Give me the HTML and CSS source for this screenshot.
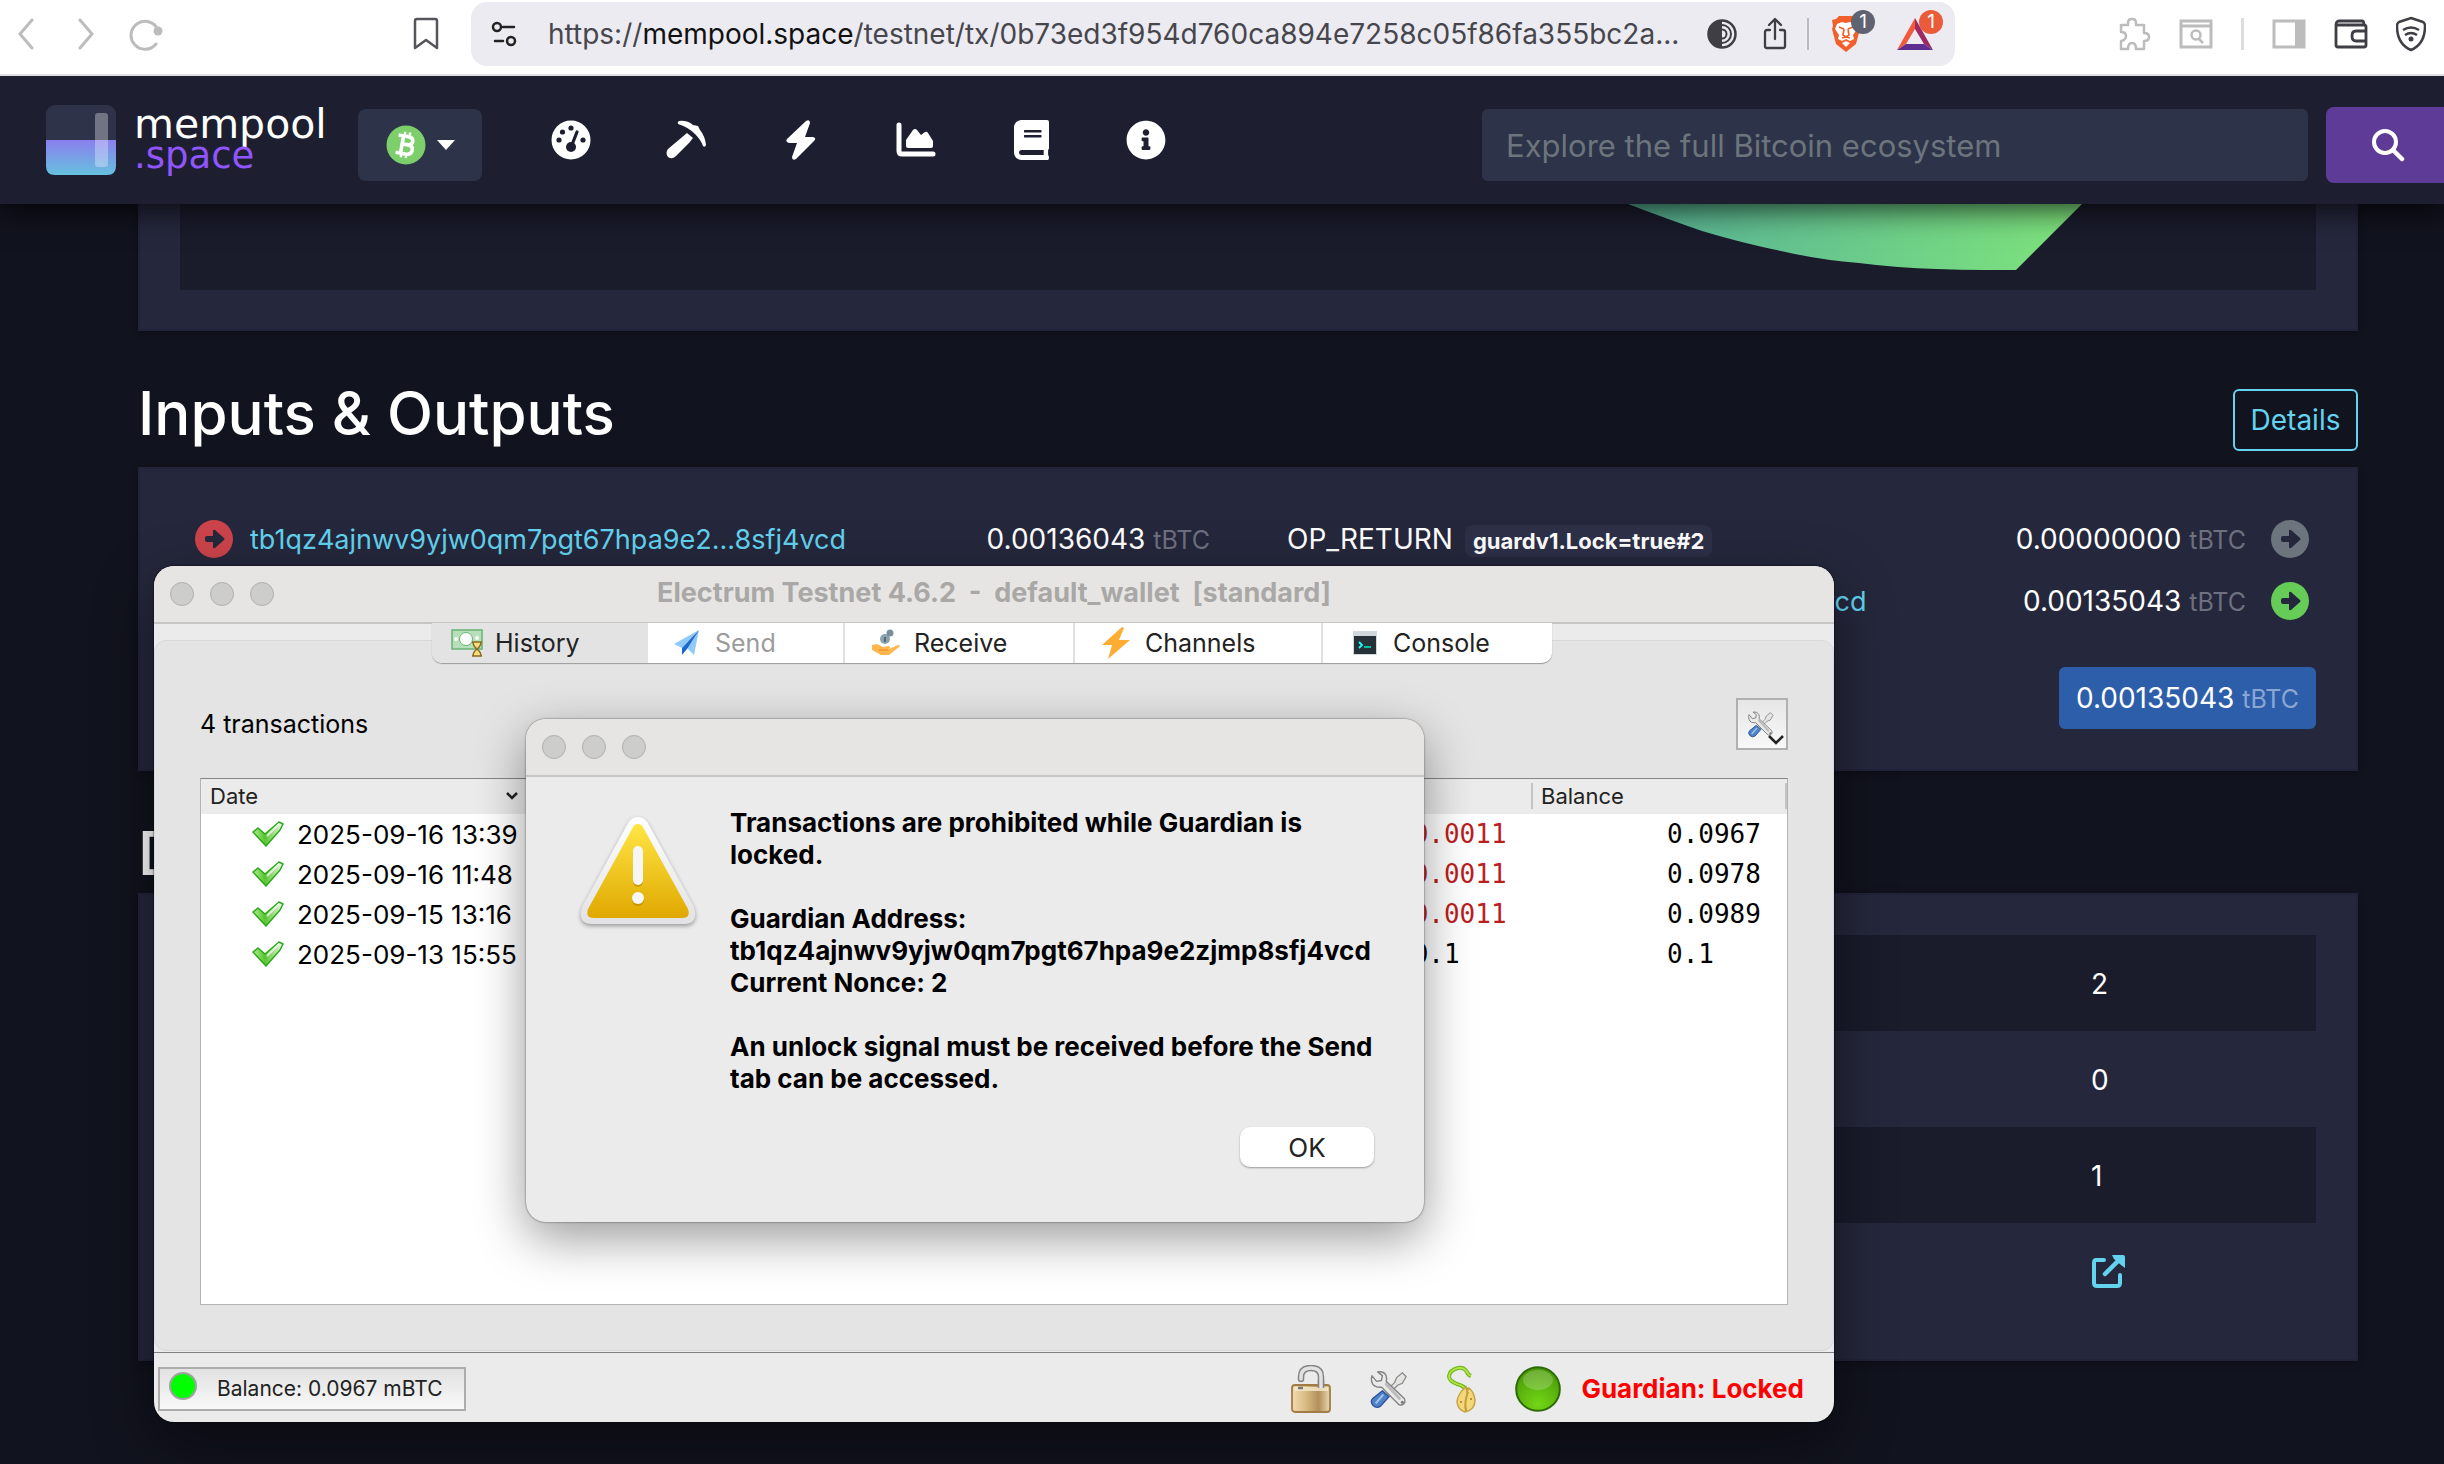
FILE: index.html
```html
<!DOCTYPE html>
<html lang="en">
<head>
<meta charset="utf-8">
<title>Transaction - mempool.space</title>
<link rel="stylesheet" href="styles.css">
</head>
<body>
<svg class="defs" width="0" height="0" aria-hidden="true">
  <defs>
    <linearGradient id="liquid" x1="0" y1="0" x2="0" y2="1"><stop offset="0" stop-color="#8a7fee"/><stop offset="1" stop-color="#66c1de"/></linearGradient>
    <linearGradient id="flow" x1="0" y1="0" x2="1" y2="0"><stop offset="0" stop-color="#56b095"/><stop offset=".4" stop-color="#66c68e"/><stop offset="1" stop-color="#7fe47b"/></linearGradient>
    <linearGradient id="warn" x1="0" y1="0" x2="0" y2="1"><stop offset="0" stop-color="#ffe645"/><stop offset="1" stop-color="#e0a800"/></linearGradient>
    <linearGradient id="rim" x1="0" y1="0" x2="0" y2="1"><stop offset="0" stop-color="#fff"/><stop offset="1" stop-color="#e2e2e4"/></linearGradient>
    <linearGradient id="check" x1="0" y1="0" x2="1" y2="0"><stop offset="0" stop-color="#b5ee8d"/><stop offset=".4" stop-color="#55c42e"/><stop offset="1" stop-color="#f2fbea"/></linearGradient>
    <linearGradient id="brass" x1="0" y1="0" x2="1" y2="0"><stop offset="0" stop-color="#efd9ae"/><stop offset=".35" stop-color="#d9bd85"/><stop offset=".7" stop-color="#b0905a"/><stop offset="1" stop-color="#ecd8b0"/></linearGradient>
    <radialGradient id="ball" cx=".5" cy=".85" r=".8"><stop offset="0" stop-color="#73d716"/><stop offset="1" stop-color="#4b9a08"/></radialGradient>
    <symbol id="arrow-circle" viewBox="0 0 38 38"><circle cx="19" cy="19" r="19" fill="currentColor"/><path d="M12 16h6v-5q0-2 2-1l9 8q1 1 0 2l-9 8q-2 1-2-1v-5h-6q-2 0-2-2v-2q0-2 2-2z" fill="#25273c"/></symbol>
    <symbol id="tick" viewBox="0 0 32 26"><path d="M1 11l5-4 7 6L27 1l4 2-3 6-14 16z" fill="url(#check)" stroke="#2ba81c" stroke-width="1.5" stroke-linejoin="round"/><path d="M15 15L27 3" stroke="#fff" stroke-width="2" opacity=".7"/></symbol>
    <symbol id="tools" viewBox="0 0 42 40">
      <path d="M35 3l4 4-4 7-5 2-9 9-3-3 9-9 2-5z" fill="#e4e4e2" stroke="#888" stroke-width="1.3"/>
      <path d="M14 22l7 6-9 10q-4 3-8-1-3-4 0-7z" fill="#4f83c8" stroke="#2c559b" stroke-width="1.5"/><path d="M15 26l-8 9" stroke="#a2c5ee" stroke-width="2"/>
      <path d="M3 6l5 6 5-1 1-5-5-4q7-1 9 4 1 3 0 6l19 18q2 4-1 6-4 2-6-1L13 18q-8 1-10-5-1-4 0-7z" fill="#e9e9e7" stroke="#858585" stroke-width="1.5" stroke-linejoin="round"/><path d="M18 15l14 15" stroke="#bbb" stroke-width="3" stroke-linecap="round"/><circle cx="35" cy="34" r="1.6" fill="#777"/>
    </symbol>
  </defs>
</svg>

<header class="toolbar">
  <div class="tools-left">
    <button class="icon-btn" aria-label="Back"><svg width="18" height="32" viewBox="0 0 18 32"><path d="M15 2L3 16l12 14" fill="none" stroke="#bcbcbc" stroke-width="3" stroke-linecap="round" stroke-linejoin="round"/></svg></button>
    <button class="icon-btn" aria-label="Forward"><svg width="18" height="32" viewBox="0 0 18 32"><path d="M3 2l12 14L3 30" fill="none" stroke="#bcbcbc" stroke-width="3" stroke-linecap="round" stroke-linejoin="round"/></svg></button>
    <button class="icon-btn reload" aria-label="Reload"><svg width="34" height="34" viewBox="0 0 34 34"><path d="M29 13A14 14 0 1 0 27 27" fill="none" stroke="#bcbcbc" stroke-width="3" stroke-linecap="round"/><circle cx="29" cy="14" r="4.500" fill="#bcbcbc"/></svg></button>
  </div>
  <button class="icon-btn bookmark" aria-label="Bookmark"><svg width="26" height="34" viewBox="0 0 26 34"><path d="M2 4q0-2 2-2h18q2 0 2 2v27l-11-8L2 31z" fill="none" stroke="#55555b" stroke-width="2.500" stroke-linejoin="round"/></svg></button>
  <div class="address">
    <svg width="26" height="26" viewBox="0 0 26 26"><g fill="none" stroke="#222" stroke-width="2.500" stroke-linecap="round"><circle cx="6" cy="6" r="4"/><path d="M12 6h11M4 20h8"/><circle cx="20" cy="20" r="4"/></g></svg>
    <div class="url">https://<b>mempool.space</b>/testnet/tx/0b73ed3f954d760ca894e7258c05f86fa355bc2a...</div>
    <svg width="30" height="30" viewBox="0 0 30 30"><circle cx="15" cy="15" r="13.500" fill="none" stroke="#3e3e44" stroke-width="2.500"/><path d="M15 1a14 14 0 0 0 0 28z" fill="#3e3e44"/><path d="M15 6a9 9 0 0 1 0 18M15 10.500a4.500 4.500 0 0 1 0 9" fill="none" stroke="#3e3e44" stroke-width="2"/></svg>
    <svg class="share" width="24" height="34" viewBox="0 0 24 34"><path d="M7 13H4q-2 0-2 2v14q0 2 2 2h16q2 0 2-2V15q0-2-2-2h-3M12 22V3M6 8l6-6 6 6" fill="none" stroke="#3e3e44" stroke-width="2.300" stroke-linecap="round" stroke-linejoin="round"/></svg>
    <span class="bar-line"></span>
    <span class="badged"><svg width="30" height="36" viewBox="0 0 30 36"><path d="M8 0h14l3 3 4 1-1 6 1 3-4 15-10 8-10-8L1 13l1-3-1-6 4-1z" fill="#f1602a"/><path d="M6 8l5-2 4 1 4-1 5 2 2 5-4 6 1 4-4 2-4-2-4 2-4-2 1-4-4-6zM11 27l4-2 4 2-4 4z" fill="#fff"/><path d="M8 11l5 2M22 11l-5 2M13 13l-1 6 3 2 3-2-1-6M11 22l4-1 4 1" fill="none" stroke="#f1602a" stroke-width="1.700"/></svg><span class="count grey">1</span></span>
    <span class="badged"><svg width="36" height="32" viewBox="0 0 36 32"><path d="M18 0L0 32l9-6 9-15z" fill="#f15a3a"/><path d="M18 0l18 32-9-6-9-15z" fill="#9e2a63"/><path d="M0 32h36l-9-6H9z" fill="#5f2e91"/></svg><span class="count red">1</span></span>
  </div>
  <div class="tools-right">
    <svg width="34" height="34" viewBox="0 0 34 34"><path d="M4 8h7V6q0-4 4-4t4 4v2h8v8q5 0 5 4t-5 4v8h-8q0-6-4-6t-4 6H4v-8q5-1 5-5t-5-4z" fill="none" stroke="#bcbcbc" stroke-width="2.500" stroke-linejoin="round"/></svg>
    <svg width="34" height="30" viewBox="0 0 34 30"><path d="M2 2h30v26H2zM2 7h30" fill="none" stroke="#bcbcbc" stroke-width="3"/><circle cx="17" cy="16" r="4.500" fill="none" stroke="#bcbcbc" stroke-width="2.500"/><path d="M20 20l4 4" stroke="#bcbcbc" stroke-width="2.500"/></svg>
    <span class="bar-line light"></span>
    <svg width="34" height="30" viewBox="0 0 34 30"><path d="M2 2h30v26H2z" fill="none" stroke="#bcbcbc" stroke-width="3"/><path d="M23 2h9v26h-9z" fill="#bcbcbc"/></svg>
    <svg width="34" height="30" viewBox="0 0 34 30"><path d="M2 6v20q0 2 2 2h26q2 0 2-2V8q0-2-2-2zq0-4 3-4h23q2 0 2 4M32 12H22q-4 0-4 5t4 5h10" fill="none" stroke="#3e3e44" stroke-width="2.800" stroke-linejoin="round"/></svg>
    <svg width="30" height="36" viewBox="0 0 30 36"><path d="M15 2l12 4q2 1 2 4 0 18-14 24Q1 28 1 10q0-3 2-4z" fill="none" stroke="#3e3e44" stroke-width="2.500"/><path d="M7 14q8-5 16 0M9 19q6-4 12 0" fill="none" stroke="#3e3e44" stroke-width="2.500"/><circle cx="15" cy="23" r="2.500" fill="#3e3e44"/></svg>
  </div>
</header>

<nav class="navbar">
  <a class="brand" href="#"><svg width="70" height="70" viewBox="0 0 70 70"><rect width="70" height="70" rx="9" fill="#2e3349"/><path d="M0 35h70v26q0 9-9 9H9q-9 0-9-9z" fill="url(#liquid)"/><rect x="49" y="8" width="13" height="54" rx="3" fill="#fff" opacity=".32"/></svg><span class="brand-text">mempool<span>.space</span></span></a>
  <button class="network" aria-label="Network"><svg width="40" height="40" viewBox="0 0 40 40"><circle cx="20" cy="20" r="19.500" fill="#7ccf6b"/><g transform="rotate(10 20 20)" fill="none" stroke="#fff"><path d="M16 11v18M11 11.500h10q5 0 5 4t-5 4h-5h6q5 0 5 4.500t-5 5H11" stroke-width="3.600"/><path d="M17 7v5M22 7v5M17 28v5M22 28v5" stroke-width="2.400"/></g></svg><svg width="18" height="10" viewBox="0 0 18 10"><path d="M0 0h18L9 10z" fill="#fff"/></svg></button>
  <ul class="menu">
    <li><a href="#" aria-label="Dashboard"><svg width="40" height="40" viewBox="0 0 40 40"><circle cx="20" cy="20" r="19.500" fill="#fff"/><g fill="#1d1f31"><circle cx="20" cy="8" r="2.600"/><circle cx="11.500" cy="12" r="2.600"/><circle cx="8" cy="20" r="2.600"/><circle cx="32" cy="20" r="2.600"/><circle cx="20" cy="27" r="5"/></g><path d="M20.500 26l5.500-14" stroke="#1d1f31" stroke-width="3.200" stroke-linecap="round"/></svg></a></li>
    <li><a href="#" aria-label="Mining"><svg width="40" height="40" viewBox="0 0 40 40"><path d="M13 1q-2 1-1 3 10 3 17 10 6 6 8 12 2 2 3-1-1-9-6-15l-2-4-5-1Q21 0 13 1z" fill="#fff"/><path d="M21 13l6 5-4 5L10 36q-4 4-8 1-3-4 0-8z" fill="#fff"/></svg></a></li>
    <li><a href="#" aria-label="Lightning"><svg width="30" height="40" viewBox="0 0 30 40"><path d="M20 1q4-2 4 2l-5 14h8q4 1 1 4L10 39q-4 2-4-2l5-14H3q-4-1-2-4z" fill="#fff"/></svg></a></li>
    <li><a href="#" aria-label="Graphs"><svg width="40" height="40" viewBox="0 0 40 40"><path d="M3 5v26q0 3 3 3h31" fill="none" stroke="#fff" stroke-width="5" stroke-linecap="round"/><path d="M10 20l7-10q2-2 4 0l4 5 4-3q2-1 3 1l5 8v5q0 2-2 2H12q-2 0-2-2z" fill="#fff"/></svg></a></li>
    <li><a href="#" aria-label="Docs"><svg width="35" height="40" viewBox="0 0 448 512"><path fill="#fff" d="M448 360V24c0-13.300-10.700-24-24-24H96C43 0 0 43 0 96v320c0 53 43 96 96 96h328c13.300 0 24-10.700 24-24v-16c0-7.500-3.500-14.300-8.900-18.700-4.200-15.400-4.200-59.300 0-74.700 5.400-4.300 8.900-11.100 8.900-18.600zM128 134c0-3.300 2.700-6 6-6h212c3.300 0 6 2.700 6 6v20c0 3.300-2.700 6-6 6H134c-3.300 0-6-2.700-6-6v-20zm0 64c0-3.300 2.700-6 6-6h212c3.300 0 6 2.700 6 6v20c0 3.300-2.700 6-6 6H134c-3.300 0-6-2.700-6-6v-20zm253.400 250H96c-17.700 0-32-14.300-32-32 0-17.600 14.400-32 32-32h285.400c-1.900 17.100-1.900 46.900 0 64z"/></svg></a></li>
    <li><a href="#" aria-label="About"><svg width="40" height="40" viewBox="0 0 512 512"><path fill="#fff" d="M256 8C119 8 8 119 8 256c0 137 111 248 248 248s248-111 248-248C504 119 393 8 256 8zm0 110c23.200 0 42 18.800 42 42s-18.800 42-42 42-42-18.800-42-42 18.800-42 42-42zm56 254c0 6.600-5.400 12-12 12h-88c-6.600 0-12-5.400-12-12v-24c0-6.600 5.400-12 12-12h12v-64h-12c-6.600 0-12-5.400-12-12v-24c0-6.600 5.400-12 12-12h64c6.600 0 12 5.400 12 12v100h12c6.600 0 12 5.400 12 12v24z"/></svg></a></li>
  </ul>
  <form class="search"><input type="text" aria-label="Search" placeholder="Explore the full Bitcoin ecosystem"><button type="button" aria-label="Search"><svg width="34" height="34" viewBox="0 0 34 34"><circle cx="14" cy="14" r="11" fill="none" stroke="#fff" stroke-width="4"/><path d="M22 22l9 9" stroke="#fff" stroke-width="4.500" stroke-linecap="round"/></svg></button></form>
</nav>

<main class="page">
  <section class="box flow-box"><div class="flow"><svg width="454" height="66" viewBox="0 0 454 66"><path d="M0 0q42 16 74 27 40 12 79 20 39 9 78 12 39 5 78 6 24 1 47 1h32L454 0z" fill="url(#flow)"/></svg></div></section>

  <div class="section-head"><h2>Inputs &amp; Outputs</h2><button class="outline">Details</button></div>
  <section class="box io">
    <div class="io-cols">
      <div class="io-row"><svg class="red-icon" width="38" height="38"><use href="#arrow-circle"/></svg><a href="#">tb1qz4ajnwv9yjw0qm7pgt67hpa9e2...8sfj4vcd</a><span class="amount">0.00136043 <small>tBTC</small></span></div>
      <div>
        <div class="io-row"><span>OP_RETURN</span><span class="tag">guardv1.Lock=true#2</span><span class="amount">0.00000000 <small>tBTC</small></span><svg class="grey-icon" width="38" height="38"><use href="#arrow-circle"/></svg></div>
        <div class="io-row"><a href="#">tb1qz4ajnwv9yjw0qm7pgt67hpa9e...8sfj4vcd</a><span class="amount">0.00135043 <small>tBTC</small></span><svg class="green-icon" width="38" height="38"><use href="#arrow-circle"/></svg></div>
      </div>
    </div>
    <button class="total">0.00135043 <small>tBTC</small></button>
  </section>

  <div class="section-head second"><h2>Details</h2></div>
  <section class="box details">
    <table>
      <tr><td></td><td>2</td></tr>
      <tr><td></td><td>0</td></tr>
      <tr><td></td><td>1</td></tr>
      <tr><td></td><td><a href="#" aria-label="Open"><svg width="34" height="34" viewBox="0 0 34 34"><path d="M13 5H5q-2 0-2 3v20q0 3 3 3h20q3 0 3-3v-8" fill="none" stroke="#63d3ef" stroke-width="4" stroke-linecap="round"/><path d="M14 19L27 6" stroke="#63d3ef" stroke-width="4.500" stroke-linecap="round"/><path d="M21 0h11q2 0 2 2v11l-4-3-7-6z" fill="#63d3ef"/></svg></a></td></tr>
    </table>
  </section>
</main>

<section class="window wallet">
  <div class="titlebar"><span class="lights"><i></i><i></i><i></i></span><span class="title">Electrum Testnet 4.6.2 &nbsp;- &nbsp;default_wallet &nbsp;[standard]</span></div>
  <div class="tabs">
    <button class="tab t-history on"><svg width="32" height="28" viewBox="0 0 32 28"><rect x="1" y="1" width="30" height="19" fill="#b7dfba" stroke="#69b374" stroke-width="1.500"/><circle cx="15" cy="10" r="6.500" fill="#fff" stroke="#69b374"/><circle cx="5" cy="10" r="2" fill="#fff"/><circle cx="26" cy="9" r="2" fill="#fff"/><path d="M21 13h10M21 27h10M22 13q0 4 4 7-4 3-4 7h8q0-4-4-7 4-3 4-7z" fill="#f7dd7b" stroke="#8a6a25" stroke-width="1.500"/></svg>History</button>
    <button class="tab t-send"><svg width="26" height="26" viewBox="0 0 26 26"><path d="M25 0L0 14l8 4z" fill="#90caf9"/><path d="M25 0L11 16l9 9z" fill="#90caf9"/><path d="M25 0L8 18v7l5-6z" fill="#1e66d0"/></svg>Send</button>
    <button class="tab t-receive"><svg width="28" height="28" viewBox="0 0 28 28"><circle cx="13" cy="10" r="5" fill="#8ba3af"/><circle cx="18" cy="4" r="3.500" fill="#78909c"/><path d="M13 8v5" stroke="#455a64" stroke-width="1.500"/><path d="M0 16l5-1 6 3 6-1q2 1 0 3l9-4q3 0 1 2l-10 8H9l-9-5z" fill="#ffb74d"/><path d="M7 21h9" stroke="#ef9530" stroke-width="1.500"/></svg>Receive</button>
    <button class="tab t-channels"><svg width="28" height="32" viewBox="0 0 28 32"><path d="M20 0L0 18h10L6 32l22-19H17l5-12z" fill="#ffac33"/></svg>Channels</button>
    <button class="tab t-console"><svg width="24" height="24" viewBox="0 0 24 24"><path d="M0 0h24v24H0z" fill="#cfd8dc"/><path d="M1 5h22v18H1z" fill="#263238"/><path d="M6 11l3 3-3 3" fill="none" stroke="#18ffff" stroke-width="1.800"/><path d="M11 16h7" stroke="#00bfa5" stroke-width="2"/></svg>Console</button>
  </div>
  <div class="pane">
    <div class="pane-head"><span>4 transactions</span><button class="tool-btn" aria-label="Tools"><svg width="28" height="30"><use href="#tools"/></svg><svg class="caret" width="16" height="10" viewBox="0 0 16 10"><path d="M1 1l7 7 7-7" fill="none" stroke="#222" stroke-width="2.500"/></svg></button></div>
    <div class="list">
      <table>
        <thead><tr><th class="c-date"><span>Date<svg width="12" height="8" viewBox="0 0 12 8"><path d="M1 1l5 5 5-5" fill="none" stroke="#222" stroke-width="2.500"/></svg></span></th><th class="c-desc"></th><th class="c-amt"></th><th class="c-bal"><span>Balance</span></th></tr></thead>
        <tbody>
          <tr><td class="date"><svg width="32" height="26"><use href="#tick"/></svg>2025-09-16 13:39</td><td></td><td class="amt neg">-0.0011</td><td class="bal">0.0967</td></tr>
          <tr><td class="date"><svg width="32" height="26"><use href="#tick"/></svg>2025-09-16 11:48</td><td></td><td class="amt neg">-0.0011</td><td class="bal">0.0978</td></tr>
          <tr><td class="date"><svg width="32" height="26"><use href="#tick"/></svg>2025-09-15 13:16</td><td></td><td class="amt neg">-0.0011</td><td class="bal">0.0989</td></tr>
          <tr><td class="date"><svg width="32" height="26"><use href="#tick"/></svg>2025-09-13 15:55</td><td></td><td class="amt"> 0.1</td><td class="bal">0.1</td></tr>
        </tbody>
      </table>
    </div>
  </div>
  <footer class="status">
    <button class="balance"><i></i>Balance: 0.0967 mBTC</button>
    <div class="status-right">
      <svg width="40" height="48" viewBox="0 0 40 48"><path d="M10 14v-2q0-9 10-9t10 9v12" fill="none" stroke="#858585" stroke-width="6.500" stroke-linecap="round"/><path d="M10 14v-2q0-9 10-9t10 9v12" fill="none" stroke="#e2e2e2" stroke-width="3.500" stroke-linecap="round"/><rect x="1" y="20" width="38" height="27" rx="3" fill="url(#brass)" stroke="#a37b45" stroke-width="1.800"/><path d="M3 22h34v4H3z" fill="#f5ead0" opacity=".8"/><path d="M7 23h5" stroke="#777" stroke-width="2.500"/><path d="M30 15v8" stroke="#858585" stroke-width="6.500"/><path d="M30 15v8" stroke="#e2e2e2" stroke-width="3.500"/></svg>
      <svg width="40" height="40"><use href="#tools"/></svg>
      <svg width="30" height="48" viewBox="0 0 30 48"><path d="M24 11q-3-1-4-4-3-5-9-4-8 2-9 8 0 5 8 8 8 2 11 8" fill="none" stroke="#75b51b" stroke-width="4"/><path d="M24 11q-3-1-4-4-3-5-9-4-8 2-9 8 0 5 8 8 8 2 11 8" fill="none" stroke="#aee84a" stroke-width="1.800"/><path d="M19 22q-8 6-9 15 1 8 8 10 10-2 10-12-1-8-6-12l-2 4z" fill="#f3d877" stroke="#c9a046" stroke-width="1.500"/><path d="M21 27q-4 10-2 19" fill="none" stroke="#c39a3c" stroke-width="2"/><circle cx="14" cy="37" r="1" fill="#a37b2b"/><circle cx="24" cy="34" r="1" fill="#a37b2b"/></svg>
      <svg width="46" height="46" viewBox="0 0 46 46"><circle cx="23" cy="23" r="21.800" fill="url(#ball)" stroke="#2d6b05" stroke-width="2"/><ellipse cx="23" cy="14" rx="15" ry="10" fill="#fff" opacity=".2"/></svg>
      <strong>Guardian: Locked</strong>
    </div>
  </footer>
</section>

<section class="window dialog" role="alertdialog" aria-label="Warning">
  <div class="titlebar"><span class="lights"><i></i><i></i><i></i></span></div>
  <div class="dialog-body">
    <svg class="warn-icon" width="118" height="112" viewBox="0 0 118 112"><path d="M59 2q7 0 11 8l45 82q5 17-11 17H14q-16 0-11-17L48 10q4-8 11-8z" fill="url(#rim)"/><path d="M59 9q4 0 6 5l44 80q3 9-6 9H15q-9 0-6-9L53 14q2-5 6-5z" fill="url(#warn)"/><path d="M59 38v29" stroke="#a97c00" stroke-width="10" stroke-linecap="round" opacity=".5"/><path d="M59 36v29" stroke="#f6f6f4" stroke-width="10" stroke-linecap="round"/><circle cx="59" cy="85" r="6" fill="#a97c00" opacity=".5"/><circle cx="59" cy="83" r="6" fill="#f6f6f4"/></svg>
    <div class="message">
      <p>Transactions are prohibited while Guardian is<br>locked.</p>
      <p>Guardian Address:<br>tb1qz4ajnwv9yjw0qm7pgt67hpa9e2zjmp8sfj4vcd<br>Current Nonce: 2</p>
      <p>An unlock signal must be received before the Send<br>tab can be accessed.</p>
    </div>
  </div>
  <button class="ok">OK</button>
</section>
</body>
</html>
```
FILE: styles.css
```css
* { box-sizing: border-box; }
body {
  margin: 0;
  min-height: 100vh;
  position: relative;
  overflow: hidden;
  background: #11131e;
  color: #fff;
  font-family: Inter, "Liberation Sans", sans-serif;
  font-size: 28px;
}
.defs { position: absolute; }
svg { display: block; flex: none; }
button { font: inherit; color: inherit; border: 0; background: none; padding: 0; margin: 0; }
a { color: #63d3ef; text-decoration: none; }

/* Browser toolbar */
.toolbar {
  position: relative;
  z-index: 1;
  display: flex;
  align-items: center;
  height: 76px;
  padding: 0 18px 6px 16px;
  background: #fff;
  border-bottom: 2px solid #e1e1e6;
}
.tools-left { display: flex; align-items: center; padding-left: 1px; }
.tools-left .icon-btn { width: 60px; }
.tools-left .reload { margin-left: -8px; }
.bookmark { margin: 0 32px 0 auto; }
.address {
  display: flex;
  align-items: center;
  width: 1484px;
  height: 64px;
  margin-right: 162px;
  padding: 0 22px 0 20px;
  border-radius: 16px;
  background: #ecebf2;
}
.url { flex: 1; margin-left: 31px; color: #46464c; white-space: nowrap; overflow: hidden; }
.url b { font-weight: 400; color: #111; }
.share { margin: 0 20px 0 26px; }
.bar-line { width: 2px; height: 32px; background: #b9b9c0; }
.bar-line.light { background: #dcdce2; width: 3px; }
.badged { position: relative; margin-left: 22px; }
.badged + .badged { margin-left: 36px; }
.count {
  position: absolute;
  top: -6px;
  left: 20px;
  width: 24px;
  border-radius: 12px;
  text-align: center;
  font-size: 19px;
  line-height: 24px;
  color: #fff;
}
.count.grey { background: #5f6270; }
.count.red { background: #ea5b3a; left: 22px; top: -8px; }
.tools-right { display: flex; align-items: center; gap: 28px; }

/* Site navigation */
.navbar {
  position: relative;
  display: flex;
  align-items: center;
  height: 128px;
  padding: 0 0 0 46px;
  background: #1d1f31;
  box-shadow: 0 0 30px 4px rgba(0, 0, 0, .8);
}
.brand { display: flex; align-items: center; gap: 18px; width: 312px; color: #fff; }
.brand-text { font-family: "DejaVu Sans", sans-serif; font-size: 41px; line-height: 32px; padding-bottom: 1px; }
.brand-text span { display: block; color: #9155fd; font-size: 37px; }
.network {
  display: flex;
  align-items: center;
  justify-content: center;
  gap: 11px;
  width: 124px;
  height: 72px;
  margin-top: 10px;
  border-radius: 8px;
  background: #2d3348;
}
.menu { display: flex; gap: 1px; margin: 0 0 0 32px; padding: 0; list-style: none; }
.menu a { display: flex; justify-content: center; width: 114px; }
.search { display: flex; gap: 18px; align-items: center; margin: 10px 0 0 auto; }
.search input {
  width: 826px;
  height: 72px;
  padding: 0 24px;
  border: 0;
  border-radius: 6px;
  background: #2d3348;
  font: inherit;
  font-size: 31px;
}
.search input::placeholder { color: #6c757d; opacity: 1; }
.search button {
  display: flex;
  align-items: center;
  padding-left: 45px;
  width: 118px;
  height: 76px;
  border-radius: 8px 0 0 8px;
  background: #5f3b98;
}

/* Transaction page */
.page { padding: 0 86px 0 138px; }
.box { background: #25273c; border: 2px solid #212339; box-shadow: 0 2px 8px rgba(0, 0, 0, .3); }
.flow-box { border-top: 0; padding: 0 40px 39px; }
.flow { background: #1a1b2b; height: 86px; }
.flow svg { margin-left: auto; margin-right: 234px; }
.section-head { display: flex; justify-content: space-between; height: 136px; }
h2 { margin: 0; padding-top: 44px; font-size: 60px; font-weight: 500; line-height: 76px; }
.section-head.second { height: 122px; }
.outline {
  height: 62px;
  width: 125px;
  margin-top: 58px;
  border: 2px solid #63d3ef;
  border-radius: 6px;
  color: #63d3ef;
}
.io { height: 304px; padding: 39px 40px; }
.io-cols { display: grid; grid-template-columns: 1fr 1029px; gap: 77px; }
.io-row { display: flex; align-items: center; height: 62px; }
.io-row a { font-size: 27px; }
.red-icon { color: #cd444b; margin: 0 17px 0 15px; }
.grey-icon, .green-icon { margin: 0 7px 0 25px; }
.grey-icon { color: #6c757d; }
.green-icon { color: #66cc58; }
.amount { margin-left: auto; }
small { font-size: 25px; color: #6e7080; }
.tag {
  margin: 4px 0 0 12px;
  padding: 0 8px;
  border-radius: 8px;
  background: #2d3047;
  font-size: 22px;
  font-weight: 700;
  line-height: 32px;
}
.total {
  display: block;
  width: 257px;
  height: 62px;
  margin: 35px 0 0 auto;
  border-radius: 6px;
  background: #2d5eaa;
}
.total small { color: #8aa6d3; }
.details { padding: 40px; }
.details table { width: 100%; border-collapse: collapse; table-layout: fixed; }
.details td { height: 96px; padding: 2px 0 0; }
.details td:last-child { width: 225px; }
.details tr:nth-child(odd) { background: #1a1b2b; }

/* Desktop windows */
.window { position: absolute; color: #000; font-size: 26px; background: #ebebeb; }
.titlebar {
  display: flex;
  align-items: center;
  height: 58px;
  padding: 0 16px;
  background: #e6e5e3;
  border-bottom: 2px solid #c6c6c5;
}
.lights { display: flex; gap: 16px; }
.lights i { width: 24px; height: 24px; border-radius: 50%; background: #cdcdcb; border: 1px solid #b0b0ae; }
.title { flex: 1; padding: 0 104px 4px 0; text-align: center; font-size: 27px; font-weight: 700; color: #a9a8a6; }
.wallet {
  left: 154px;
  top: 566px;
  width: 1680px;
  border-radius: 20px;
  box-shadow: 0 20px 60px rgba(0, 0, 0, .45), 0 0 2px #000;
}
.wallet .titlebar { border-radius: 20px 20px 0 0; }
.tabs {
  position: relative;
  z-index: 1;
  display: flex;
  width: 1120px;
  height: 40px;
  margin: -1px auto 0;
  border-radius: 0 0 10px 10px;
  background: #fff;
  box-shadow: 0 1px 1px #999;
  padding-right: 2px;
  left: -2px;
  font-size: 25px;
}
.tab { display: flex; align-items: center; gap: 12px; color: #222; border-left: 2px solid #e1e1e1; }
.tab.on { background: #e3e3e3; border-radius: 0 0 0 10px; border-left: 0; }
.t-history { flex: 0 0 216px; padding-left: 19px; }
.t-send { flex: 0 0 195px; padding-left: 26px; gap: 15px; color: #9b9b9b; border-left: 0; }
.t-receive { flex: 0 0 230px; padding-left: 27px; gap: 14px; }
.t-channels { flex: 0 0 248px; padding-left: 27px; gap: 15px; }
.t-console { padding-left: 30px; gap: 16px; }
.pane {
  margin-top: -23px;
  padding: 57px 45px 45px;
  border: 1px solid #d9d9d9;
  border-radius: 12px;
  background: #e4e4e4;
}
.pane-head { display: flex; justify-content: space-between; align-items: center; height: 52px; margin-bottom: 28px; font-size: 25px; }
.tool-btn {
  position: relative;
  width: 52px;
  height: 52px;
  padding: 9px;
  border: 2px solid #b0b0b0;
  background: linear-gradient(#e6e6e6, #f8f8f8);
}
.caret { position: absolute; right: 2px; bottom: 3px; }
.list { height: 527px; border: 1px solid #b4b4b4; border-top: 1px solid #858585; background: #fff; }
.list table { width: 100%; border-collapse: collapse; table-layout: fixed; }
.list th { height: 35px; padding: 0 0 1px; background: #ebebeb; text-align: left; font-size: 22px; font-weight: 400; color: #222; }
.list td { height: 40px; padding: 0; }
.list th span { display: flex; align-items: center; }
.c-date { width: 326px; }
.c-date span { justify-content: space-between; padding: 0 9px; }
.c-amt { width: 240px; }
.c-bal { width: 256px; }
.c-bal span { height: 26px; padding-left: 8px; border-left: 2px solid #c4c4c4; border-right: 2px solid #c4c4c4; }
.date { white-space: nowrap; }
.date svg { display: inline-block; vertical-align: -3px; margin: 0 13px 0 51px; }
.amt, .bal { font-family: "DejaVu Sans Mono", monospace; white-space: pre; }
.list .amt { padding-left: 106px; }
.list .bal { padding-left: 136px; }
.neg { color: #bc1e1e; }
.status {
  display: flex;
  justify-content: space-between;
  align-items: center;
  height: 70px;
  margin-top: 1px;
  padding: 2px 30px 0 4px;
  border-top: 1px solid #808080;
}
.balance {
  display: flex;
  align-items: center;
  gap: 20px;
  width: 308px;
  height: 44px;
  padding: 0 9px;
  border: 2px solid #adadad;
  background: linear-gradient(#e2e2e2, #f8f8f8);
  color: #222;
  font-size: 21px;
}
.balance i { width: 28px; height: 28px; margin-bottom: 6px; border: 2px solid #a2a2a2; border-radius: 50%; background: #0f0; }
.status-right { display: flex; align-items: center; gap: 38px; }
.status-right strong { margin-left: -18px; color: #f00; }

.dialog {
  left: 526px;
  top: 719px;
  width: 898px;
  border-radius: 20px;
  padding-bottom: 55px;
  box-shadow: 0 16px 50px rgba(0, 0, 0, .4), 0 0 2px #555;
}
.dialog .titlebar { border-radius: 20px 20px 0 0; }
.dialog-body { display: flex; gap: 33px; padding: 30px 0 0 53px; }
.warn-icon { margin-top: 8px; filter: drop-shadow(0 2px 2px rgba(0, 0, 0, .35)); }
.message { font-weight: 700; line-height: 32px; white-space: nowrap; }
.message p { margin: 0 0 32px; }
.ok {
  display: block;
  width: 134px;
  height: 40px;
  margin: 0 50px 0 auto;
  border-radius: 10px;
  background: #fff;
  box-shadow: 0 1px 2px #999;
  color: #222;
}
```
